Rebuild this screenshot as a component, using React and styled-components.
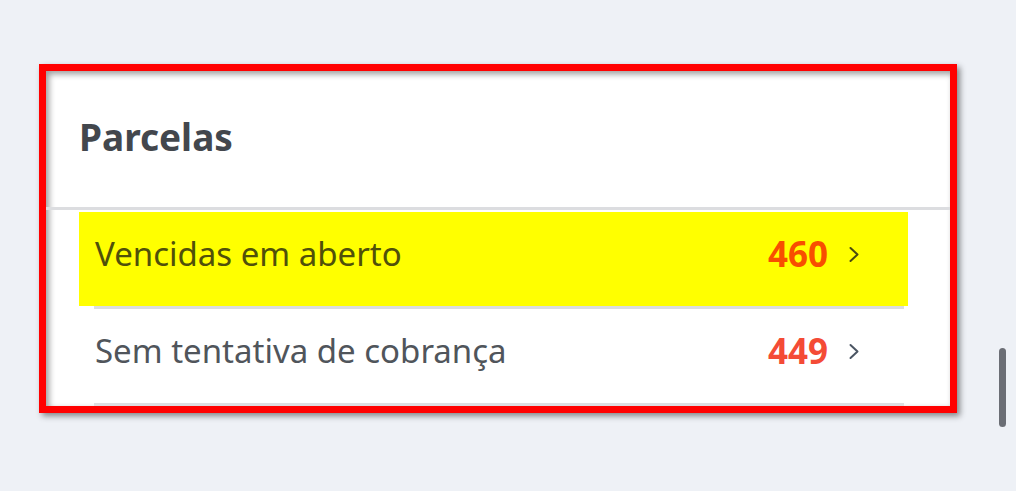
import React from 'react'
import styled, { createGlobalStyle } from 'styled-components'

const GlobalStyle = createGlobalStyle`
  html, body {
    margin: 0;
    padding: 0;
    background: #eef1f6;
    font-family: "Noto Sans", "Open Sans", Arial, sans-serif;
  }
`

const Page = styled.div`
  display: flex;
  width: 1016px;
  height: 491px;
  overflow: hidden;
`

const Main = styled.main`
  flex: 1;
  padding: 64px 0 0 39px;
`

const Frame = styled.section`
  box-sizing: border-box;
  width: 918px;
  height: 349px;
  border: 7px solid #ff0000;
  background: #fff;
  box-shadow: 3px 3px 6px rgba(0, 0, 0, 0.45), inset 3px 3px 6px rgba(0, 0, 0, 0.4);
  display: flex;
  flex-direction: column;
`

const Header = styled.header`
  box-sizing: border-box;
  height: 139px;
  display: flex;
  align-items: center;
  padding: 0 0 6px 33px;
  border-bottom: 3px solid #dcdde0;
`

const Title = styled.h2`
  margin: 0;
  font-size: 37px;
  line-height: 1;
  font-weight: 700;
  color: #43474d;
`

const List = styled.ul`
  list-style: none;
  margin: 2px 0 0;
  padding: 0 42px 0 33px;
`

const Row = styled.li`
  box-sizing: border-box;
  height: 94px;
  display: flex;
  align-items: center;
  padding: 0 48px 12px 16px;
  background: ${p => (p.$highlight ? '#ffff00' : 'transparent')};
`

const Label = styled.span`
  flex: 1;
  font-size: 33px;
  line-height: 1;
  color: ${p => (p.$highlight ? '#50500a' : '#50555b')};
`

const Count = styled.span`
  font-size: 35px;
  line-height: 1;
  font-weight: 700;
  color: ${p => (p.$highlight ? '#f84e00' : '#f44b36')};
`

const Chevron = styled.svg`
  width: 12px;
  height: 17px;
  margin: 2px 0 0 20px;
  color: ${p => (p.$highlight ? '#4a4a10' : '#4b5563')};
`

const Separator = styled.div`
  height: 3px;
  margin: 0 4px 0 15px;
  background: #dcdde0;
`

const ScrollTrack = styled.div`
  width: 17px;
  padding-top: 348px;
`

const ScrollThumb = styled.div`
  width: 7px;
  height: 79px;
  border-radius: 4px;
  background: #6b6e75;
`

const items = [
  { label: 'Vencidas em aberto', count: 460, highlight: true },
  { label: 'Sem tentativa de cobrança', count: 449 },
]

const App = () => {
  return (
    <Page>
      <GlobalStyle />
      <Main>
        <Frame>
          <Header>
            <Title>Parcelas</Title>
          </Header>
          <List>
            {items.map(item => (
              <React.Fragment key={item.label}>
                <Row $highlight={item.highlight}>
                  <Label $highlight={item.highlight}>{item.label}</Label>
                  <Count $highlight={item.highlight}>{item.count}</Count>
                  <Chevron $highlight={item.highlight} viewBox="0 0 12 17" fill="none">
                    <path d="M2.5 2l7 6.5-7 6.5" stroke="currentColor" strokeWidth="2" strokeLinecap="round" strokeLinejoin="round" />
                  </Chevron>
                </Row>
                <Separator />
              </React.Fragment>
            ))}
          </List>
        </Frame>
      </Main>
      <ScrollTrack>
        <ScrollThumb />
      </ScrollTrack>
    </Page>
  )
}

export default App
